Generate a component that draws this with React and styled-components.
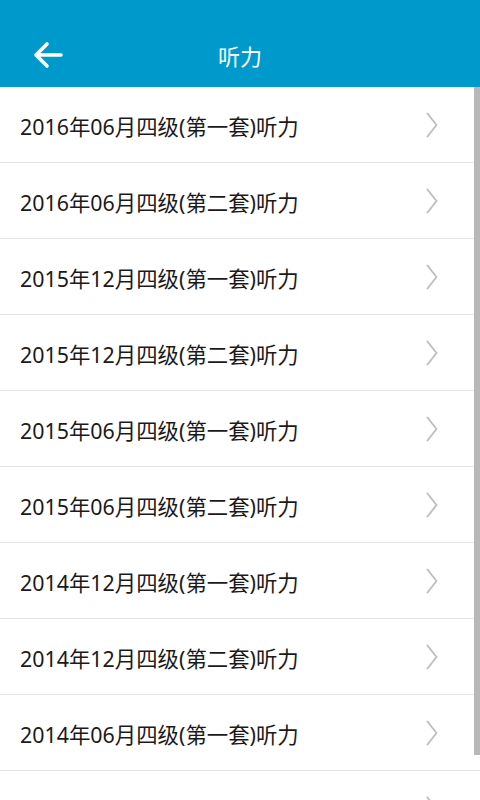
import React from 'react';
import styled, { createGlobalStyle } from 'styled-components';

const GlobalStyle = createGlobalStyle`
  html, body {
    margin: 0;
    padding: 0;
    background: #fff;
    font-family: "Noto Sans", "Noto Sans CJK SC", sans-serif;
  }
`;

const Page = styled.div`
  width: 480px;
  height: 800px;
  overflow: hidden;
  display: flex;
  flex-direction: column;
  background: #fff;
`;

// 상단 바 (상태표시줄 영역 포함)
const Header = styled.div`
  height: 64px;
  padding-top: 23px;
  flex-shrink: 0;
  background: #0099cc;
  display: flex;
  align-items: center;
  position: relative;
`;

const BackButton = styled.button`
  width: 96px;
  height: 64px;
  padding: 0 0 0 33px;
  margin: 0;
  border: none;
  background: transparent;
  display: flex;
  align-items: center;
  cursor: pointer;
`;

const Title = styled.div`
  position: absolute;
  left: 0;
  right: 0;
  top: 23px;
  bottom: 0;
  display: flex;
  align-items: center;
  justify-content: center;
  color: #fff;
  font-size: 22px;
  pointer-events: none;
`;

const ListWrap = styled.div`
  flex: 1;
  position: relative;
  overflow: hidden;
`;

const Row = styled.div`
  height: 75px;
  border-bottom: 1px solid #e6e6e6;
  display: flex;
  align-items: center;
  justify-content: space-between;
  padding: 0 42px 0 20px;
  color: #1a1a1a;
  font-size: 21.4px;
`;

const RowText = styled.span`
  padding-top: 1px;
`;

// 스크롤바 (콘텐츠 위에 겹침)
const ScrollBar = styled.div`
  position: absolute;
  top: 0;
  right: 0;
  width: 6px;
  height: 668px;
  background: #b8b8b8;
`;

const items = [
  '2016年06月四级(第一套)听力',
  '2016年06月四级(第二套)听力',
  '2015年12月四级(第一套)听力',
  '2015年12月四级(第二套)听力',
  '2015年06月四级(第一套)听力',
  '2015年06月四级(第二套)听力',
  '2014年12月四级(第一套)听力',
  '2014年12月四级(第二套)听力',
  '2014年06月四级(第一套)听力',
  '2014年06月四级(第二套)听力',
];

const Chevron = () => (
  <svg width="12" height="26" viewBox="0 0 12 26">
    <path d="M1.5 1.5 L10.5 13 L1.5 24.5" fill="none" stroke="#c0c0c0" strokeWidth="2" strokeLinecap="round" strokeLinejoin="round" />
  </svg>
);

const BackArrow = () => (
  <svg width="30" height="28" viewBox="0 0 30 28">
    <path d="M3 14 H28 M14 3 L3 14 L14 25" fill="none" stroke="#fff" strokeWidth="3.6" strokeLinecap="round" strokeLinejoin="round" />
  </svg>
);

function App() {
  return (
    <Page>
      <GlobalStyle />
      <Header>
        <BackButton>
          <BackArrow />
        </BackButton>
        <Title>听力</Title>
      </Header>
      <ListWrap>
        {items.map((text, i) => (
          <Row key={i}>
            <RowText>{text}</RowText>
            <Chevron />
          </Row>
        ))}
        <ScrollBar />
      </ListWrap>
    </Page>
  );
}

export default App;
